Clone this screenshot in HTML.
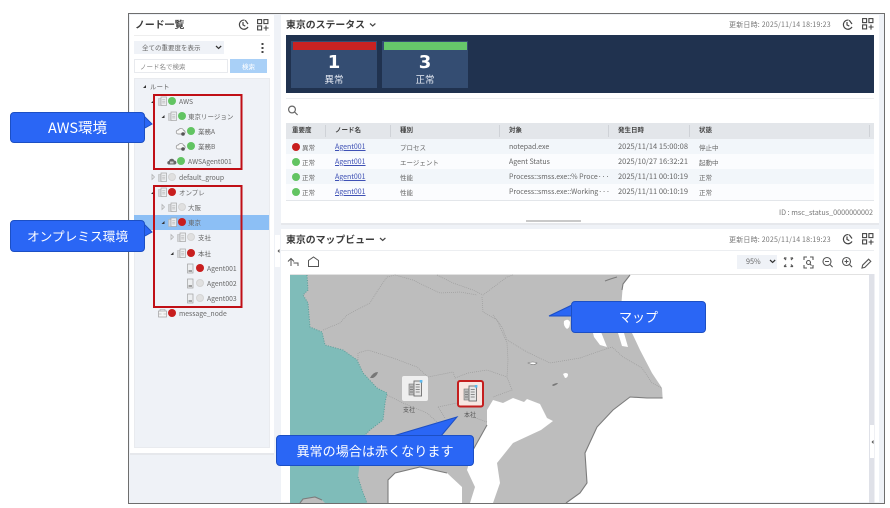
<!DOCTYPE html>
<html lang="ja"><head><meta charset="utf-8"><style>
html,body{margin:0;padding:0;background:#fff}
#p{position:relative;width:890px;height:508px;overflow:hidden;background:#fff;font-family:"Noto Sans CJK JP","Liberation Sans",sans-serif;color:#555;filter:blur(.3px)}
#p div{position:absolute;box-sizing:border-box}
.t{white-space:nowrap;line-height:12px;height:12px;font-size:6.8px;color:#666}
.j{font-size:6.5px}
.h{font-size:9.9px;font-weight:700;color:#3c3c3c;line-height:14px;height:14px;white-space:nowrap}
.d{width:8px;height:8px;border-radius:50%}
.r{background:#c81e1e}.g{background:#62c462}.n{background:#e0e0e0;border:1px solid #d4d4d4}
.th{font-size:6.5px;font-weight:700;color:#444;white-space:nowrap;line-height:12px}
.c{font-size:7px;color:#666;white-space:nowrap;line-height:12px}
.c.j{font-size:6.5px}
.c.dt{font-size:7.5px}
.l{color:#3f51b5;text-decoration:underline}
.co{color:#fff;font-size:12.7px;text-align:center;background:#2a66f5;border:1px solid #1c4fc4;border-radius:4px;white-space:nowrap}
svg{position:absolute;left:0;top:0}
</style></head><body><div id="p">

<!-- window -->
<div style="left:128px;top:13px;width:757px;height:491px;background:#eff2f7;border:1.5px solid #6e6e6e"></div>
<!-- left panel -->
<div style="left:130px;top:15px;width:144px;height:438px;background:#fff"></div>
<div style="left:130px;top:453px;width:144px;height:2px;background:#e6e8ec"></div>
<div class="h" style="left:135px;top:17px">ノード一覧</div>
<div style="left:134px;top:35px;width:136px;height:1px;background:#eee"></div>
<div style="left:134px;top:41px;width:90px;height:13px;background:#eff2f7"></div>
<div class="t j" style="left:142px;top:41px">全ての重要度を表示</div>
<div style="left:134px;top:59px;width:94px;height:14px;background:#fff;border:1px solid #e8eaee"></div>
<div class="t j" style="left:140px;top:60px;color:#888">ノード名で検索</div>
<div style="left:230px;top:59px;width:37px;height:14px;background:#a9d0f7"></div>
<div class="t j" style="left:242px;top:60px;color:#fff">検索</div>
<div style="left:134px;top:78px;width:136px;height:370px;background:#eff2f7;border:1px solid #e9ebef"></div>
<div style="left:134px;top:215px;width:135px;height:15px;background:#8cbff5"></div>

<!-- right panels -->
<div style="left:281px;top:15px;width:598px;height:208px;background:#fff"></div>
<div style="left:281px;top:223px;width:598px;height:2px;background:#e6e8ec"></div>
<div style="left:281px;top:229px;width:598px;height:273px;background:#fff"></div>
<div class="h" style="left:286px;top:17px">東京のステータス</div>
<div class="t" style="left:729px;top:18.500px;font-size:7px;color:#777;letter-spacing:.2px">更新日時: 2025/11/14 18:19:23</div>
<div style="left:286px;top:35px;width:588px;height:58px;background:#20324f"></div>
<div style="left:291px;top:41px;width:86px;height:47px;background:#344d72"></div>
<div style="left:293px;top:42px;width:83px;height:8px;background:#c82222"></div>
<div style="left:382px;top:41px;width:86px;height:47px;background:#344d72"></div>
<div style="left:384px;top:42px;width:83px;height:8px;background:#66c76a"></div>
<div style="left:291px;top:51px;width:86px;height:24px;line-height:24px;text-align:center;color:#fff;font-size:18px;font-weight:700;font-family:'DejaVu Sans',sans-serif">1</div>
<div style="left:382px;top:51px;width:86px;height:24px;line-height:24px;text-align:center;color:#fff;font-size:18px;font-weight:700;font-family:'DejaVu Sans',sans-serif">3</div>
<div style="left:291px;top:72px;width:86px;height:14px;line-height:14px;text-align:center;color:#e4e9f2;font-size:9.5px">異常</div>
<div style="left:382px;top:72px;width:86px;height:14px;line-height:14px;text-align:center;color:#e4e9f2;font-size:9.5px">正常</div>
<div style="left:286px;top:98px;width:588px;height:1px;background:#eceef1"></div>

<!-- table -->
<div style="left:286px;top:123px;width:588px;height:78px;background:#fff;border-bottom:1px solid #e3e6ea"></div>
<div style="left:286px;top:123px;width:588px;height:16px;background:#e3e6ea"></div>
<div style="left:286px;top:139px;width:588px;height:15px;background:#f2f6fa"></div>
<div style="left:286px;top:154px;width:588px;height:15px;background:#fbfcfe"></div>
<div style="left:286px;top:169px;width:588px;height:15px;background:#f2f6fa"></div>
<div style="left:286px;top:184px;width:588px;height:16px;background:#fbfcfe"></div>
<div style="left:325px;top:125px;width:1px;height:12px;background:#cfd2d7"></div>
<div style="left:390px;top:125px;width:1px;height:12px;background:#cfd2d7"></div>
<div style="left:499px;top:125px;width:1px;height:12px;background:#cfd2d7"></div>
<div style="left:608px;top:125px;width:1px;height:12px;background:#cfd2d7"></div>
<div style="left:689px;top:125px;width:1px;height:12px;background:#cfd2d7"></div>
<div style="left:869px;top:125px;width:1px;height:12px;background:#cfd2d7"></div>
<div class="th" style="left:292px;top:123px">重要度</div>
<div class="th" style="left:335px;top:123px">ノード名</div>
<div class="th" style="left:400px;top:123px">種別</div>
<div class="th" style="left:509px;top:123px">対象</div>
<div class="th" style="left:618px;top:123px">発生日時</div>
<div class="th" style="left:699px;top:123px">状態</div>

<div class="d r" style="left:292px;top:143px"></div><div class="c j" style="left:302px;top:141px">異常</div>
<div class="c l" style="left:335px;top:141px">Agent001</div><div class="c j" style="left:400px;top:141px">プロセス</div><div class="c" style="left:509px;top:141px">notepad.exe</div><div class="c dt" style="left:618px;top:141px">2025/11/14 15:00:08</div><div class="c j" style="left:699px;top:141px">停止中</div>

<div class="d g" style="left:292px;top:158px"></div><div class="c j" style="left:302px;top:156px">正常</div>
<div class="c l" style="left:335px;top:156px">Agent001</div><div class="c j" style="left:400px;top:156px">エージェント</div><div class="c" style="left:509px;top:156px">Agent Status</div><div class="c dt" style="left:618px;top:156px">2025/10/27 16:32:21</div><div class="c j" style="left:699px;top:156px">起動中</div>

<div class="d g" style="left:292px;top:173px"></div><div class="c j" style="left:302px;top:171px">正常</div>
<div class="c l" style="left:335px;top:171px">Agent001</div><div class="c j" style="left:400px;top:171px">性能</div><div class="c" style="left:509px;top:171px">Process::smss.exe::% Proce···</div><div class="c dt" style="left:618px;top:171px">2025/11/11 00:10:19</div><div class="c j" style="left:699px;top:171px">正常</div>

<div class="d g" style="left:292px;top:188px"></div><div class="c j" style="left:302px;top:186px">正常</div>
<div class="c l" style="left:335px;top:186px">Agent001</div><div class="c j" style="left:400px;top:186px">性能</div><div class="c" style="left:509px;top:186px">Process::smss.exe::Working···</div><div class="c dt" style="left:618px;top:186px">2025/11/11 00:10:19</div><div class="c j" style="left:699px;top:186px">正常</div>

<div class="t" style="left:779px;top:207px;color:#777;font-size:7.2px">ID : msc_status_0000000002</div>
<div style="left:526px;top:220px;width:55px;height:2px;background:#c9c9c9"></div>

<!-- map panel header -->
<div class="h" style="left:286px;top:232px">東京のマップビュー</div>
<div class="t" style="left:729px;top:233.500px;font-size:7px;color:#777;letter-spacing:.2px">更新日時: 2025/11/14 18:19:23</div>
<div style="left:281px;top:250px;width:593px;height:1px;background:#eceef1"></div>
<div style="left:737px;top:255px;width:40px;height:14px;background:#eff2f7"></div>
<div class="t" style="left:746px;top:256px;color:#666;font-size:7.2px">95%</div>
<div style="left:290px;top:274px;width:579px;height:1px;background:#e2e2e2"></div>

<!-- map + icons svg -->
<svg width="890" height="508" viewBox="0 0 890 508">
<defs>
<g id="clock" fill="none" stroke="#444" stroke-width="1.200"><path d="M7.500 1.600A4.600 4.600 0 1 0 11 8.400"/><path d="M6 3.500V6.400L8.300 7.600M8.200 1.700L11 5.500"/></g>
<g id="grid" fill="none" stroke="#444" stroke-width="1.100"><rect x=".6" y=".6" width="4" height="4"/><rect x="6.900" y=".6" width="4" height="4"/><rect x=".6" y="6.900" width="4" height="4"/><path d="M6.600 9H11.600M9 6.600V11.600"/></g>
<g id="node"><rect x="0.500" y="1.500" width="4.500" height="7" fill="#d4d6d9" stroke="#b4b4b4" stroke-width=".5"/><rect x="3" y="0" width="5.500" height="8.500" fill="#eceef0" stroke="#a6a6a6" stroke-width=".7"/><path d="M4.200 2.500h3M4.200 4.200h3M4.200 5.900h3" stroke="#aaa" stroke-width=".6"/></g>
<g id="cloud"><path d="M2 7A2 2 0 0 1 2.400 3 2.800 2.800 0 0 1 7.600 3.400 1.900 1.900 0 0 1 8 7Z" fill="#f7f7f7" stroke="#888" stroke-width=".7"/><circle cx="7" cy="7" r="1.800" fill="#555"/></g>
<g id="aws"><path d="M1.500 7.500A1.800 1.800 0 0 1 2 4 2.800 2.800 0 0 1 7.400 3.600 2 2 0 0 1 8 7.500Z" fill="#666"/><rect x="3" y="4.500" width="3.500" height="2" fill="#ccc"/></g>
<g id="dev"><rect x=".5" y="0" width="5.500" height="9" fill="#eceef0" stroke="#a0a0a0" stroke-width=".7"/><rect x="1.500" y="6" width="3.500" height="2" fill="#a0a0a0"/></g>
<g id="msg"><rect x=".5" y="2" width="8" height="6" fill="#f4f4f4" stroke="#a0a0a0" stroke-width=".7"/><path d="M2 2V.5H7V2M.5 5H3.500M5.500 5H8.500" fill="none" stroke="#a0a0a0" stroke-width=".6"/></g>
<g id="big"><rect x="0" y="3" width="7" height="11" fill="#bbb" stroke="#777" stroke-width=".6"/><rect x="5" y="0" width="7.500" height="15" fill="#e6e6e6" stroke="#6e6e6e" stroke-width=".9"/><path d="M6.700 3.500h4M6.700 6h4M6.700 8.500h4M6.700 11h4M1 6h3M1 8.500h3M1 11h3" stroke="#6e6e6e" stroke-width=".8"/><rect x="10.800" y="-1" width="2.600" height="2.600" fill="#5bb8ee"/></g>
</defs>

<!-- header icons -->
<use href="#clock" x="237" y="18.500"/><use href="#grid" x="257" y="19"/>
<use href="#clock" x="841" y="18.500"/><use href="#grid" x="862" y="18"/>
<use href="#clock" x="841" y="233"/><use href="#grid" x="862" y="233"/>
<!-- chevrons -->
<g fill="none" stroke="#444" stroke-width="1.200"><path d="M370 23.500l2.700 2.400 2.700-2.400M380 238l2.700 2.400 2.700-2.400"/></g>
<g fill="none" stroke="#333" stroke-width="1.200"><path d="M216 46l2.600 2.400 2.600-2.400M770 260l2.600 2.400 2.600-2.400"/></g>
<!-- kebab -->
<g fill="#444"><rect x="261.500" y="43" width="2" height="2"/><rect x="261.500" y="47" width="2" height="2"/><rect x="261.500" y="51" width="2" height="2"/></g>
<!-- search -->
<g fill="none" stroke="#666" stroke-width="1.200"><circle cx="292" cy="109.500" r="3.400"/><path d="M294.600 112l3 3"/></g>

<!-- toolbar left -->
<g fill="none" stroke="#555" stroke-width="1"><path d="M291 266V259M288 261.500L291 258.500 294 261.500M293.500 263H298V266"/><path d="M308.500 266.500V260.500L313.500 257L318.500 260.500V266.500Z"/></g>
<!-- toolbar right -->
<g fill="none" stroke="#555" stroke-width="1.100">
<path d="M784 258h2.500M784 258l2 2M793 258h-2.500M793 258l-2 2M784 266.500l2-2M784 266.500h2.500M793 266.500l-2-2M793 266.500h-2.500" stroke-width="1.200"/>
<path d="M804 260v-3h3M810 257h3v3M813 265v3h-3M807 268h-3v-3"/><circle cx="808.500" cy="262.500" r="2"/><path d="M810 264l1.500 1.500"/>
<circle cx="827" cy="261.500" r="4"/><path d="M825 261.500h4M830 264.500l2.600 2.600"/>
<circle cx="846.500" cy="261.500" r="4"/><path d="M844.500 261.500h4M846.500 259.500v4M849.500 264.500l2.600 2.600"/>
<path d="M862 268l.6-2.800 6-6 2.200 2.200-6 6Z"/>
</g>

<!-- MAP -->
<rect x="290" y="275" width="100" height="228" fill="#7fbcb9"/>
<path d="M307 275L308 290 303 295 308 303 310 327 322 332 325 345 343 350 357 360 363 373 377 388 387 393 385 403 383 420 370 430 363 437 358 477 362 490 367 503H500V275Z" fill="#bdbdbd"/>
<path d="M300 503L303 499 315 497 322 500 325 503Z" fill="#bdbdbd"/>
<path d="M499 275H630L623 284 621.500 302 621 312 633 335 640 350 652 373 662 388 662.600 398 647 398 630 397 613 410 597 427 585 453 587 483 580 493 566 503H499Z" fill="#bdbdbd"/>
<!-- white bays -->
<path d="M388 503L388 480 395 473 420 467 447 473 462 487 462 503Z" fill="#fff"/>
<path d="M487 410L493 400 503 403 513 398 524 402 527 399 540 404 547 418 553 421 541 430 513 443 497 463 500 483 493 503H470L475 487 467 470 473 450 487 425Z" fill="#fff"/>
<!-- coast dark lines -->
<g fill="none" stroke="#7c7c7c" stroke-width="1.100">
<path d="M662.600 398L647 398 630 397 613 410 597 427 585 453 587 483 580 493 566 503"/>
<path d="M388 503L388 480 395 473 420 467 447 473"/>
<path d="M622 290L623 284 630 275"/>
<path d="M605 281Q610 279 617 277"/>
<path d="M300 503L303 499 315 497 322 500"/>
<path d="M473 450L487 425"/>
</g>
<g fill="none" stroke="#5a9c98" stroke-width="1" stroke-dasharray="1 1.500"><path d="M307 275L308 290 303 295 308 303 310 327 322 332 325 345 343 350 357 360 363 373 377 388 387 393 385 403 383 420 370 430 363 437"/><path d="M358 477L362 490 367 503"/></g>
<!-- lakes -->
<path d="M370 378Q373 372 378 372 377 376 373 378Z" fill="#777"/>
<path d="M528 363Q533 361 537 363 534 366 528 363Z" fill="#fff" stroke="#777" stroke-width=".6"/>
<path d="M563 374Q566 372 568 374 568 378 565 378Z" fill="#fff"/>
<path d="M552 385Q555 383 558 383 557 385 553 386Z" fill="#777"/>
<path d="M564 321Q568 318 570 322 570 328 567 329 563 326 564 321Z" fill="#fff"/>
<path d="M593 333L601 332 607 347 600 345 594 337Z M618 333L624 333 628 347 622 346Z" fill="#fff"/>
<!-- prefecture borders -->
<g fill="none" stroke="#999" stroke-width=".7" stroke-dasharray=".9 1.100">
<path d="M323 330L340 323 347 315 370 303 378 290 387 277 395 275 413 280 427 287 440 293 460 292 477 295"/>
<path d="M437 275L453 283 473 290 483 295 507 277 513 275"/>
<path d="M482 297L483 312 497 320 507 343 508 360 507 377"/>
<path d="M493 315L502 327 507 340 527 352 550 363 580 358 597 352 612 347 623 357 642 368 652 383 662 388"/>
<path d="M358 360L358 353 368 350 393 358 417 367 428 377 453 372 455 378 468 373 487 370 507 377 512 390 493 397"/>
<path d="M387 395L403 403 427 413 437 422"/>
<path d="M438 407L457 403M438 407L445 418"/>
<path d="M473 417L487 422"/>
</g>
<!-- map node icons -->
<rect x="402" y="376" width="26" height="25" rx="2" fill="#efefef"/>
<use href="#big" x="409" y="381"/>
<rect x="458" y="381" width="25" height="25.500" rx="2" fill="#f8e7e2" stroke="#c41e1e" stroke-width="2"/>
<use href="#big" x="464" y="386"/>
<text x="409" y="412" font-size="6" fill="#555" text-anchor="middle" font-family="Noto Sans CJK JP,sans-serif">支社</text>
<text x="470" y="417" font-size="6" fill="#555" text-anchor="middle" font-family="Noto Sans CJK JP,sans-serif">本社</text>

<!-- Tree arrows -->
<g fill="#333"><path d="M143 88l3-3v3ZM151 103l3-3v3ZM161.500 118l3-3v3ZM151 194l3-3v3ZM161.500 224l3-3v3ZM170.500 255l3-3v3Z"/></g>
<g fill="none" stroke="#aaa" stroke-width=".7"><path d="M152 174.500l2.500 2.500-2.500 2.500ZM162 204.500l2.500 2.500-2.500 2.500ZM171 234.500l2.500 2.500-2.500 2.500Z"/></g>

<!-- Tree icons -->
<use href="#node" x="158" y="97"/><use href="#node" x="168" y="112"/>
<use href="#cloud" x="176" y="127"/><use href="#cloud" x="176" y="142"/>
<use href="#aws" x="167" y="157"/>
<use href="#node" x="158" y="173"/><use href="#node" x="158" y="188"/>
<use href="#node" x="168" y="203"/><use href="#node" x="168" y="218"/>
<use href="#node" x="177" y="233"/><use href="#node" x="177" y="249"/>
<use href="#dev" x="187" y="264"/><use href="#dev" x="187" y="279"/><use href="#dev" x="187" y="294"/>
<use href="#msg" x="158" y="309"/>

<!-- red boxes -->
<g fill="none" stroke="#c00f16" stroke-width="2"><rect x="154" y="95" width="87.500" height="74"/><rect x="154" y="186" width="87.500" height="121"/></g>

<!-- side handles -->
<rect x="275" y="235" width="5" height="32" fill="#fff"/><path d="M279.500 249l-2 2 2 2Z" fill="#555"/>
<rect x="869" y="274" width="5.500" height="229" fill="#dfe1e8"/>
<rect x="870" y="425" width="4" height="33" fill="#fff"/><path d="M873.500 440l-2 2 2 2Z" fill="#555"/>

<!-- callout tails -->
<g fill="#2a66f5" stroke="#1c4fc4" stroke-width="1">
<path d="M141 113L152 124 145 128"/>
<path d="M141 221L152 232 145 236"/>
<path d="M572 305L549 316 572 316"/>
<path d="M393 436L457 417 441 436"/>
</g>
</svg>

<!-- tree dots + labels -->
<div class="t j" style="left:150px;top:80px">ルート</div>
<div class="d g" style="left:168px;top:97px"></div><div class="t" style="left:179px;top:95px">AWS</div>
<div class="d g" style="left:178px;top:112px"></div><div class="t j" style="left:188px;top:110px">東京リージョン</div>
<div class="d g" style="left:187px;top:127px"></div><div class="t j" style="left:198px;top:125px">業務A</div>
<div class="d g" style="left:187px;top:142px"></div><div class="t j" style="left:198px;top:140px">業務B</div>
<div class="d g" style="left:177px;top:157px"></div><div class="t" style="left:188px;top:155px">AWSAgent001</div>
<div class="d n" style="left:168px;top:173px"></div><div class="t" style="left:179px;top:171px">default_group</div>
<div class="d r" style="left:168px;top:188px"></div><div class="t j" style="left:179px;top:186px">オンプレ</div>
<div class="d n" style="left:178px;top:203px"></div><div class="t j" style="left:188px;top:201px">大阪</div>
<div class="d r" style="left:178px;top:218px"></div><div class="t j" style="left:188px;top:216px">東京</div>
<div class="d n" style="left:187px;top:233px"></div><div class="t j" style="left:198px;top:231px">支社</div>
<div class="d r" style="left:187px;top:249px"></div><div class="t j" style="left:198px;top:247px">本社</div>
<div class="d r" style="left:196px;top:264px"></div><div class="t" style="left:207px;top:262px">Agent001</div>
<div class="d n" style="left:196px;top:279px"></div><div class="t" style="left:207px;top:277px">Agent002</div>
<div class="d n" style="left:196px;top:294px"></div><div class="t" style="left:207px;top:292px">Agent003</div>
<div class="d r" style="left:168px;top:309px"></div><div class="t" style="left:179px;top:307px">message_node</div>

<!-- callouts -->
<div class="co" style="left:10px;top:112px;width:135px;height:31px;line-height:29px;font-size:14.500px">AWS環境</div>
<div class="co" style="left:10px;top:220px;width:135px;height:32px;line-height:30px">オンプレミス環境</div>
<div class="co" style="left:571px;top:301px;width:135px;height:32px;line-height:30px;font-size:13px">マップ</div>
<div class="co" style="left:276px;top:435px;width:198px;height:31px;line-height:29px;font-size:13.100px">異常の場合は赤くなります</div>
</div></body></html>
